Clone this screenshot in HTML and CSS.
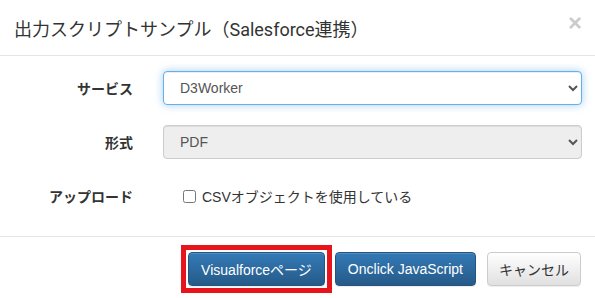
FILE: index.html
```html
<!DOCTYPE html>
<html lang="ja">
<head>
  <meta charset="UTF-8">
  <title>出力スクリプトサンプル</title>
  <link rel="stylesheet" href="styles.css">
</head>
<body>
  <div class="modal">
    <div class="modal-header">
      <h4 class="modal-title">出力スクリプトサンプル（Salesforce連携）</h4>
      <button type="button" class="close">&times;</button>
    </div>
    <div class="modal-body">
      <div class="form-row">
        <label class="control-label">サービス</label>
        <select class="form-control focus">
          <option>D3Worker</option>
        </select>
      </div>
      <div class="form-row">
        <label class="control-label">形式</label>
        <select class="form-control" disabled>
          <option>PDF</option>
        </select>
      </div>
      <div class="form-row">
        <label class="control-label">アップロード</label>
        <label class="check"><input type="checkbox"> CSVオブジェクトを使用している</label>
      </div>
    </div>
    <div class="modal-footer">
      <span class="marked"><button type="button" class="btn btn-primary">Visualforceページ</button></span>
      <button type="button" class="btn btn-primary">Onclick JavaScript</button>
      <button type="button" class="btn btn-default">キャンセル</button>
    </div>
  </div>
</body>
</html>
```

FILE: styles.css
```css
html, body {
  margin: 0;
  background: #fff;
}
body {
  font-family: "Liberation Sans", "Noto Sans CJK JP", sans-serif;
  font-size: 14px;
  color: #333;
}
.modal {
  width: 595px;
  height: 298px;
  overflow: hidden;
}
.modal-header {
  display: flex;
  align-items: center;
  justify-content: space-between;
  height: 55px;
  padding: 0 13px 0 14px;
  border-bottom: 1px solid #e5e5e5;
}
.modal-title {
  margin: 0;
  font-family: Roboto, "Noto Sans CJK JP", sans-serif;
  font-size: 18px;
  font-weight: normal;
  color: #333;
}
.close {
  border: 0;
  background: none;
  padding: 0;
  margin-top: -10px;
  font-family: "Liberation Sans", sans-serif;
  font-size: 24px;
  font-weight: bold;
  color: #000;
  opacity: .2;
  line-height: 1;
}
.modal-body {
  padding: 15px 13px 23px 0;
  display: grid;
  row-gap: 20px;
}
.form-row {
  display: grid;
  grid-template-columns: 133px 1fr;
  column-gap: 30px;
  align-items: center;
  height: 34px;
}
.control-label {
  text-align: right;
  font-weight: bold;
}
.form-control {
  height: 34px;
  width: 100%;
  padding: 0 12px;
  font-family: "Liberation Sans", "Noto Sans CJK JP", sans-serif;
  font-size: 14px;
  color: #555;
  background: #fff;
  border: 1px solid #ccc;
  border-radius: 4px;
  box-shadow: inset 0 1px 1px rgba(0,0,0,.075);
}
.form-control.focus {
  border-color: #66afe9;
  box-shadow: inset 0 1px 1px rgba(0,0,0,.075), 0 0 8px rgba(102,175,233,.6);
  outline: 0;
}
.form-control[disabled] {
  background: #eee;
  opacity: 1;
}
.check {
  display: flex;
  align-items: center;
  gap: 6px;
  padding-left: 20px;
  font-weight: normal;
}
.check input {
  margin: 0;
  width: 13px;
  height: 13px;
}
.modal-footer {
  border-top: 1px solid #e5e5e5;
  padding: 8px 14px 0 0;
  display: flex;
  align-items: flex-start;
  justify-content: flex-end;
}
.marked {
  display: flex;
  border: 5px solid #e8141c;
  padding: 2px;
}
.btn {
  height: 34px;
  padding: 0 12px;
  font-family: "Liberation Sans", "Noto Sans CJK JP", sans-serif;
  font-size: 14px;
  border-radius: 4px;
  margin-top: 7px;
  margin-left: 3px;
}
.marked .btn {
  margin: 0;
}
.btn-primary {
  color: #fff;
  background: linear-gradient(to bottom, #337ab7 0, #265a88 100%);
  border: 1px solid #245580;
  box-shadow: inset 0 1px 0 rgba(255,255,255,.15), 0 1px 1px rgba(0,0,0,.075);
}
.btn-default {
  color: #333;
  background: linear-gradient(to bottom, #fff 0, #e0e0e0 100%);
  border: 1px solid #ccc;
  padding: 0 11px;
  margin-left: 11px;
  box-shadow: inset 0 1px 0 rgba(255,255,255,.15), 0 1px 1px rgba(0,0,0,.075);
}
```
